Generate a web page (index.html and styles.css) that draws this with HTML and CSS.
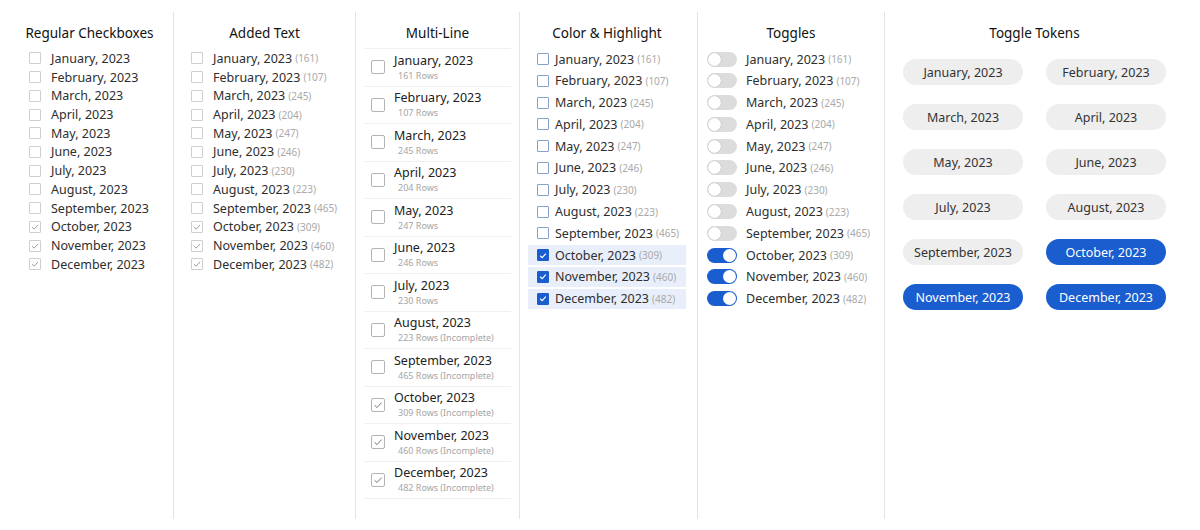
FILE: index.html
```html
<!DOCTYPE html>
<html>
<head>
<meta charset="utf-8">
<link rel="stylesheet" href="styles.css">
</head>
<body>
<div class="board">
  <section class="col col-regular">
    <h2 class="title">Regular Checkboxes</h2>
    <ul class="list plain">
      <li><span class="cb"></span>January, 2023</li>
      <li><span class="cb"></span>February, 2023</li>
      <li><span class="cb"></span>March, 2023</li>
      <li><span class="cb"></span>April, 2023</li>
      <li><span class="cb"></span>May, 2023</li>
      <li><span class="cb"></span>June, 2023</li>
      <li><span class="cb"></span>July, 2023</li>
      <li><span class="cb"></span>August, 2023</li>
      <li><span class="cb"></span>September, 2023</li>
      <li><span class="cb on"><svg viewBox="0 0 12 12"><path d="M2.5 6.2 L5 8.6 L9.6 3.6"/></svg></span>October, 2023</li>
      <li><span class="cb on"><svg viewBox="0 0 12 12"><path d="M2.5 6.2 L5 8.6 L9.6 3.6"/></svg></span>November, 2023</li>
      <li><span class="cb on"><svg viewBox="0 0 12 12"><path d="M2.5 6.2 L5 8.6 L9.6 3.6"/></svg></span>December, 2023</li>
    </ul>
  </section>

  <section class="col col-added">
    <h2 class="title">Added Text</h2>
    <ul class="list plain">
      <li><span class="cb"></span>January, 2023<span class="n">(161)</span></li>
      <li><span class="cb"></span>February, 2023<span class="n">(107)</span></li>
      <li><span class="cb"></span>March, 2023<span class="n">(245)</span></li>
      <li><span class="cb"></span>April, 2023<span class="n">(204)</span></li>
      <li><span class="cb"></span>May, 2023<span class="n">(247)</span></li>
      <li><span class="cb"></span>June, 2023<span class="n">(246)</span></li>
      <li><span class="cb"></span>July, 2023<span class="n">(230)</span></li>
      <li><span class="cb"></span>August, 2023<span class="n">(223)</span></li>
      <li><span class="cb"></span>September, 2023<span class="n">(465)</span></li>
      <li><span class="cb on"><svg viewBox="0 0 12 12"><path d="M2.5 6.2 L5 8.6 L9.6 3.6"/></svg></span>October, 2023<span class="n">(309)</span></li>
      <li><span class="cb on"><svg viewBox="0 0 12 12"><path d="M2.5 6.2 L5 8.6 L9.6 3.6"/></svg></span>November, 2023<span class="n">(460)</span></li>
      <li><span class="cb on"><svg viewBox="0 0 12 12"><path d="M2.5 6.2 L5 8.6 L9.6 3.6"/></svg></span>December, 2023<span class="n">(482)</span></li>
    </ul>
  </section>

  <section class="col col-multi">
    <h2 class="title">Multi-Line</h2>
    <ul class="list multi">
      <li><span class="cb big"></span><div class="ml"><span class="main">January, 2023</span><span class="sub">161 Rows</span></div></li>
      <li><span class="cb big"></span><div class="ml"><span class="main">February, 2023</span><span class="sub">107 Rows</span></div></li>
      <li><span class="cb big"></span><div class="ml"><span class="main">March, 2023</span><span class="sub">245 Rows</span></div></li>
      <li><span class="cb big"></span><div class="ml"><span class="main">April, 2023</span><span class="sub">204 Rows</span></div></li>
      <li><span class="cb big"></span><div class="ml"><span class="main">May, 2023</span><span class="sub">247 Rows</span></div></li>
      <li><span class="cb big"></span><div class="ml"><span class="main">June, 2023</span><span class="sub">246 Rows</span></div></li>
      <li><span class="cb big"></span><div class="ml"><span class="main">July, 2023</span><span class="sub">230 Rows</span></div></li>
      <li><span class="cb big"></span><div class="ml"><span class="main">August, 2023</span><span class="sub">223 Rows (Incomplete)</span></div></li>
      <li><span class="cb big"></span><div class="ml"><span class="main">September, 2023</span><span class="sub">465 Rows (Incomplete)</span></div></li>
      <li><span class="cb big on"><svg viewBox="0 0 12 12"><path d="M2.5 6.2 L5 8.6 L9.6 3.6"/></svg></span><div class="ml"><span class="main">October, 2023</span><span class="sub">309 Rows (Incomplete)</span></div></li>
      <li><span class="cb big on"><svg viewBox="0 0 12 12"><path d="M2.5 6.2 L5 8.6 L9.6 3.6"/></svg></span><div class="ml"><span class="main">November, 2023</span><span class="sub">460 Rows (Incomplete)</span></div></li>
      <li><span class="cb big on"><svg viewBox="0 0 12 12"><path d="M2.5 6.2 L5 8.6 L9.6 3.6"/></svg></span><div class="ml"><span class="main">December, 2023</span><span class="sub">482 Rows (Incomplete)</span></div></li>
    </ul>
  </section>

  <section class="col col-color">
    <h2 class="title">Color &amp; Highlight</h2>
    <ul class="list color">
      <li><span class="cb blue"></span>January, 2023<span class="n">(161)</span></li>
      <li><span class="cb blue"></span>February, 2023<span class="n">(107)</span></li>
      <li><span class="cb blue"></span>March, 2023<span class="n">(245)</span></li>
      <li><span class="cb blue"></span>April, 2023<span class="n">(204)</span></li>
      <li><span class="cb blue"></span>May, 2023<span class="n">(247)</span></li>
      <li><span class="cb blue"></span>June, 2023<span class="n">(246)</span></li>
      <li><span class="cb blue"></span>July, 2023<span class="n">(230)</span></li>
      <li><span class="cb blue"></span>August, 2023<span class="n">(223)</span></li>
      <li><span class="cb blue"></span>September, 2023<span class="n">(465)</span></li>
      <li class="hl"><span class="cb blue on"><svg viewBox="0 0 12 12"><path d="M2.6 6.3 L5 8.5 L9.4 3.8"/></svg></span>October, 2023<span class="n">(309)</span></li>
      <li class="hl"><span class="cb blue on"><svg viewBox="0 0 12 12"><path d="M2.6 6.3 L5 8.5 L9.4 3.8"/></svg></span>November, 2023<span class="n">(460)</span></li>
      <li class="hl"><span class="cb blue on"><svg viewBox="0 0 12 12"><path d="M2.6 6.3 L5 8.5 L9.4 3.8"/></svg></span>December, 2023<span class="n">(482)</span></li>
    </ul>
  </section>

  <section class="col col-toggles">
    <h2 class="title">Toggles</h2>
    <ul class="list toggles">
      <li><span class="tg"></span>January, 2023<span class="n">(161)</span></li>
      <li><span class="tg"></span>February, 2023<span class="n">(107)</span></li>
      <li><span class="tg"></span>March, 2023<span class="n">(245)</span></li>
      <li><span class="tg"></span>April, 2023<span class="n">(204)</span></li>
      <li><span class="tg"></span>May, 2023<span class="n">(247)</span></li>
      <li><span class="tg"></span>June, 2023<span class="n">(246)</span></li>
      <li><span class="tg"></span>July, 2023<span class="n">(230)</span></li>
      <li><span class="tg"></span>August, 2023<span class="n">(223)</span></li>
      <li><span class="tg"></span>September, 2023<span class="n">(465)</span></li>
      <li><span class="tg on"></span>October, 2023<span class="n">(309)</span></li>
      <li><span class="tg on"></span>November, 2023<span class="n">(460)</span></li>
      <li><span class="tg on"></span>December, 2023<span class="n">(482)</span></li>
    </ul>
  </section>

  <section class="col col-tokens">
    <h2 class="title">Toggle Tokens</h2>
    <div class="tokens">
      <span class="tk">January, 2023</span>
      <span class="tk">February, 2023</span>
      <span class="tk">March, 2023</span>
      <span class="tk">April, 2023</span>
      <span class="tk">May, 2023</span>
      <span class="tk">June, 2023</span>
      <span class="tk">July, 2023</span>
      <span class="tk">August, 2023</span>
      <span class="tk">September, 2023</span>
      <span class="tk on">October, 2023</span>
      <span class="tk on">November, 2023</span>
      <span class="tk on">December, 2023</span>
    </div>
  </section>
</div>
</body>
</html>
```

FILE: styles.css
```css
* { box-sizing: border-box; }

html, body {
  margin: 0;
  padding: 0;
  background: #ffffff;
}

body {
  font-family: "Noto Sans", "Open Sans", sans-serif;
  color: #2e2e2e;
  font-size: 12.5px;
}

.board {
  display: flex;
  height: 530px;
  padding: 12px 0 11px 0;
}

.col {
  display: flex;
  flex-direction: column;
  border-left: 1px solid #e4e4e4;
}

.col-regular { width: 173px; border-left: none; padding-left: 28px; }
.col-added { width: 182px; padding-left: 16px; }
.col-multi { width: 164px; padding: 0 8px; }
.col-color { width: 178px; padding: 0 11px 0 8px; }
.col-toggles { width: 187px; padding-left: 8px; }
.col-tokens { width: 300px; padding-left: 18px; }

.title {
  margin: 0;
  height: 36px;
  padding-top: 11px;
  font-size: 13.5px;
  line-height: 20px;
  font-weight: 400;
  color: #111111;
  text-align: center;
}

.col-regular .title { margin-left: -22px; }
.col-added .title { margin-left: -16px; }
.col-toggles .title { margin-left: -8px; }
.col-tokens .title { margin-left: -18px; }

.list {
  list-style: none;
  margin: 0;
  padding: 0;
}

.list li {
  display: flex;
  align-items: center;
  white-space: nowrap;
}

.plain li { height: 18.72px; }
.plain { margin-top: 1px; }

.n {
  margin-left: 3px;
  font-size: 10px;
  color: #a9a9a9;
}

.cb {
  flex: none;
  width: 12px;
  height: 12px;
  border: 1px solid #cfcfcf;
  border-radius: 1px;
  margin: 0 10px 0 1px;
  display: inline-flex;
  align-items: center;
  justify-content: center;
}

.cb svg {
  width: 10px;
  height: 10px;
  fill: none;
  stroke: #888;
  stroke-width: 1;
}

/* multi-line */
.multi { border-top: 1px solid #f0f0f0; }
.multi li {
  height: 37.5px;
  border-bottom: 1px solid #f0f0f0;
  align-items: center;
}
.cb.big {
  width: 14px;
  height: 14px;
  border-color: #b3b3b3;
  border-radius: 2px;
  margin: 0 9px 0 7px;
}
.cb.big svg { width: 12px; height: 12px; stroke: #777; }
.ml {
  display: flex;
  flex-direction: column;
  margin-top: -1px;
}
.main { font-size: 12.5px; line-height: 17px; color: #222; }
.sub { font-size: 9px; line-height: 13px; color: #a5a5a5; padding-left: 4px; }

/* color & highlight */
.color { margin-top: 1px; display: flex; flex-direction: column; gap: 1.8px; }
.color li { height: 20px; padding-left: 9px; }
.color li.hl { background: #e8effb; }
.cb.blue {
  width: 12px;
  height: 12px;
  border-color: #8aa0cc;
  margin: 0 6px 0 0;
}
.cb.blue.on {
  background: #1a5dcf;
  border-color: #1a5dcf;
}
.cb.blue svg { width: 11px; height: 11px; stroke: #fff; stroke-width: 1.4; }

/* toggles */
.toggles { margin-top: 1px; display: flex; flex-direction: column; gap: 1.8px; }
.toggles li { height: 20px; padding-left: 1px; }
.tg {
  flex: none;
  position: relative;
  width: 30px;
  height: 15px;
  border-radius: 8px;
  background: #dcdcdc;
  margin-right: 9px;
}
.tg::after {
  content: "";
  position: absolute;
  top: 1px;
  left: 1px;
  width: 13px;
  height: 13px;
  border-radius: 50%;
  background: #fff;
  box-shadow: 0 0 1px rgba(0,0,0,0.35);
}
.tg.on { background: #1a5dcf; }
.tg.on::after { left: 16px; box-shadow: none; }

/* tokens */
.tokens {
  display: grid;
  grid-template-columns: 120px 120px;
  column-gap: 23px;
  row-gap: 19px;
  margin-top: 11px;
}
.tk {
  height: 26px;
  border-radius: 13px;
  background: #eeeeee;
  color: #333;
  display: flex;
  align-items: center;
  justify-content: center;
  font-size: 12.5px;
  white-space: nowrap;
}
.tk.on { background: #1a5dcf; color: #fff; }
```
